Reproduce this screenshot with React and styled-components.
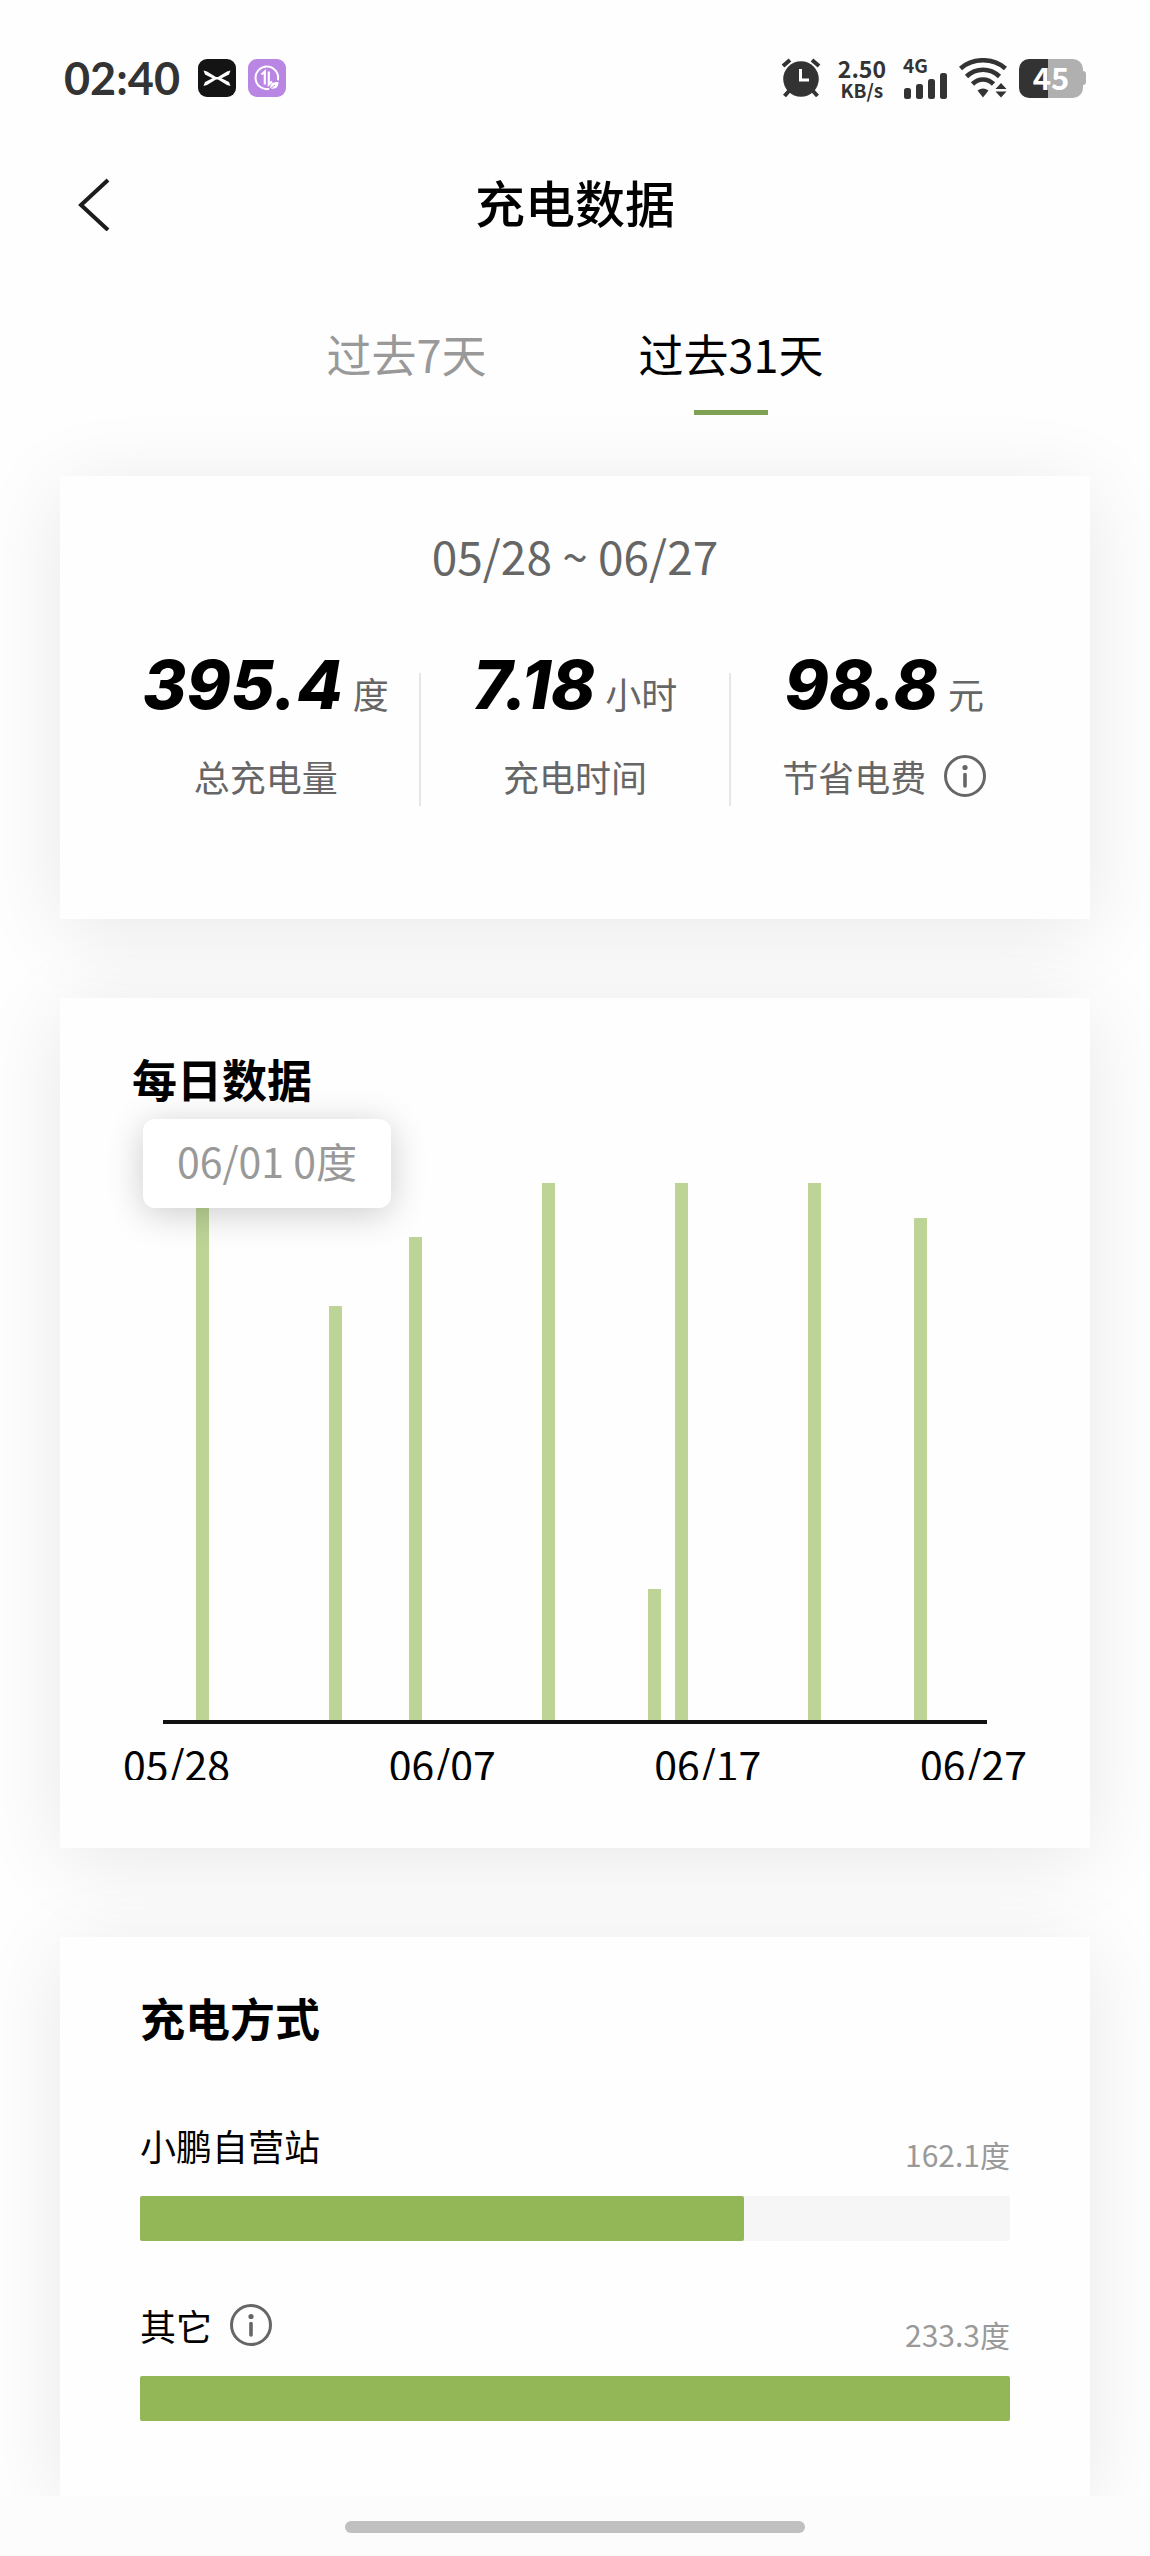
import React, { useState } from 'react'
import styled, { createGlobalStyle } from 'styled-components'

const GlobalStyle = createGlobalStyle`
* { box-sizing: border-box; }
body {
    margin: 0;
    background: #fefefe;
    color: #000;
    font-family: "Noto Sans CJK SC", "Noto Sans", sans-serif;
}
button {
    margin: 0;
    padding: 0;
    border: 0;
    background: none;
    color: inherit;
    font: inherit;
    cursor: pointer;
}
h1, h2, p { margin: 0; }
svg { display: block; }
`;

const Screen = styled.div`
display: flex;
flex-direction: column;
min-height: 100vh;
`;

const StatusBar = styled.div`
display: flex;
justify-content: space-between;
align-items: center;
height: 116px;
padding: 40px 64px 0;
color: #333;
font-family: Lato, sans-serif;
`;
const StatusGroup = styled.div`
display: flex;
align-items: center;
gap: ${props => props.$gap}px;
`;
const Clock = styled.span`
font-size: 45px;
line-height: 48px;
font-weight: 700;
margin-right: 6px;
`;
const Speed = styled.div`
display: flex;
flex-direction: column;
align-items: center;
font-family: "Noto Sans CJK SC", sans-serif;
font-weight: 700;
font-size: 23px;
line-height: 24px;
`;
const SpeedUnit = styled.span`
font-size: 19px;
line-height: 20px;
`;
const Cell = styled.div`
font-family: "Noto Sans CJK SC", sans-serif;
font-weight: 700;
font-size: 19px;
line-height: 16px;
`;
const Battery = styled.div`
display: flex;
align-items: center;
`;
const BatteryBody = styled.div`
width: 64px;
height: 39px;
border-radius: 10px;
background: linear-gradient(90deg, #333 45%, #b0b0b0 45%);
color: #fff;
font-family: "Noto Sans CJK SC", sans-serif;
font-weight: 700;
font-size: 31px;
line-height: 36px;
text-align: center;
`;
const BatteryTip = styled.div`
width: 3px;
height: 14px;
border-radius: 0 3px 3px 0;
background: #b0b0b0;
`;

const Header = styled.header`
display: grid;
grid-template-columns: 1fr auto 1fr;
align-items: center;
height: 170px;
padding: 0 78px;
`;
const BackButton = styled.button`
justify-self: start;
`;
const PageTitle = styled.h1`
font-size: 50px;
line-height: 60px;
font-weight: 500;
`;

const Tabs = styled.div`
display: flex;
justify-content: center;
gap: 152px;
padding: 38px 0 61px;
`;
const Tab = styled.button`
display: flex;
flex-direction: column;
align-items: center;
gap: 26px;
font-size: 45px;
line-height: 60px;
color: ${props => props.$active ? '#000' : '#999'};

&::after {
    content: "";
    width: 74px;
    height: 5px;
    background: ${props => props.$active ? '#7fa154' : 'transparent'};
}
`;

const Content = styled.main`
flex: 1;
display: flex;
flex-direction: column;
padding: 0 60px;
`;
const Card = styled.section`
position: relative;
background: #fefefe;
box-shadow: 0 12px 80px rgba(0, 0, 0, 0.09);
`;
const SummaryCard = styled(Card)`
padding: 49px 52px 113px;
margin-bottom: 79px;
`;
const DailyCard = styled(Card)`
padding: 51px 0 68px;
margin-bottom: 89px;
`;
const MethodCard = styled(Card)`
flex: 1;
padding: 51px 80px 75px;
`;
const CardTitle = styled.h2`
font-size: 45px;
line-height: 60px;
font-weight: 700;
`;
const DailyTitle = styled(CardTitle)`
padding: 0 72px;
`;

const DateRange = styled.p`
text-align: center;
font-size: 46px;
line-height: 60px;
color: #666;
`;
const Stats = styled.div`
display: grid;
grid-template-columns: 1fr 2px 1fr 2px 1fr;
align-items: end;
margin-top: 60px;
`;
const Divider = styled.div`
height: 133px;
background: #e6e6e6;
`;
const Stat = styled.div`
display: flex;
flex-direction: column;
align-items: center;
gap: 27px;
padding-bottom: 6px;
color: #666;
font-size: 36px;
line-height: 48px;
`;
const StatValue = styled.div`
display: flex;
align-items: baseline;
gap: 10px;
`;
const StatNumber = styled.span`
color: #000;
font-family: Inter, sans-serif;
font-size: 67px;
line-height: 80px;
font-weight: 800;
font-style: italic;
`;
const LabelWithInfo = styled.div`
display: flex;
align-items: center;
gap: 18px;
`;

const Plot = styled.div`
display: grid;
grid-template-columns: repeat(31, 1fr);
justify-items: center;
align-items: end;
height: 541px;
margin: 74px 103px 0;
border-bottom: 4px solid #111;
`;
const Bar = styled.div`
width: 13px;
background: #bed497;
`;
const AxisLabels = styled.div`
display: flex;
justify-content: space-between;
height: 42px;
margin-top: 14px;
padding: 0 63px;
overflow: hidden;
font-size: 41px;
line-height: 50px;
`;
const Tooltip = styled.div`
position: absolute;
top: 121px;
left: 83px;
padding: 0 34px 6px;
border-radius: 12px;
background: #fff;
box-shadow: 0 6px 36px rgba(0, 0, 0, 0.2);
color: #999;
font-size: 41px;
line-height: 83px;
`;

const MethodList = styled.div`
display: flex;
flex-direction: column;
gap: 60px;
margin-top: 73px;
`;
const MethodHead = styled.div`
display: flex;
justify-content: space-between;
height: 53px;
margin-bottom: 22px;
font-size: 36px;
line-height: 48px;
`;
const MethodName = styled(LabelWithInfo)`
align-self: flex-start;
`;
const MethodValue = styled.span`
align-self: flex-end;
color: #999;
font-size: 30px;
line-height: 40px;
`;
const Track = styled.div`
height: 45px;
border-radius: 2px;
background: #f6f6f6;
`;
const Fill = styled.div`
height: 100%;
border-radius: 2px;
background: #93b757;
`;

const HomeBar = styled.div`
position: relative;
display: flex;
justify-content: center;
height: 60px;
padding-top: 25px;
background: #fcfcfc;

&::after {
    content: "";
    width: 40%;
    height: 12px;
    border-radius: 6px;
    background: #c0c0c0;
}
`;

// 31 days from 05/28, share of the tallest bar
const days = Array(31).fill(0);
days[1] = 100;
days[6] = 77.1;
days[9] = 90;
days[14] = 100;
days[18] = 24.4;
days[19] = 100;
days[24] = 100;
days[28] = 93.4;

const axisLabels = ['05/28', '06/07', '06/17', '06/27'];

const stats = [
    { value: '395.4', unit: '度', label: '总充电量' },
    { value: '7.18', unit: '小时', label: '充电时间' },
    { value: '98.8', unit: '元', label: '节省电费', info: true },
];

const methods = [
    { name: '小鹏自营站', value: 162.1 },
    { name: '其它', value: 233.3, info: true },
];
const maxMethod = Math.max(...methods.map(m => m.value));

function InfoButton() {
    return (
        <button type="button" aria-label="说明">
            <svg width="42" height="42" viewBox="0 0 42 42">
                <circle cx="21" cy="21" r="19.5" fill="none" stroke="#666" strokeWidth="3" />
                <circle cx="21" cy="12.5" r="2.6" fill="#666" />
                <path d="M21 19.5v11.5" stroke="#666" strokeWidth="3.6" strokeLinecap="round" />
            </svg>
        </button>
    );
}

function XpengIcon() {
    return (
        <svg width="38" height="38" viewBox="0 0 38 38">
            <rect width="38" height="38" rx="9" fill="#141414" />
            <path d="M5.5 11.5 L9 12.5 L18 18 L20 18 L29 12.5 L32.5 11.5 L31 15.5 L23.5 19.2 L31 23 L32.5 27 L29 26 L20 20.6 L18 20.6 L9 26 L5.5 27 L7 23 L14.5 19.2 L7 15.5 Z" fill="#fff" />
        </svg>
    );
}

function SaverIcon() {
    return (
        <svg width="38" height="38" viewBox="0 0 38 38">
            <rect width="38" height="38" rx="9" fill="#ba86e4" />
            <path d="M20.5 30 A11.3 11.3 0 1 1 30 20.5" fill="none" stroke="#fff" strokeWidth="2" strokeLinecap="round" />
            <path d="M13.5 15.5 L16.8 12.5 V25.5 M20.8 12.5 V25.5 L24 22.5" fill="none" stroke="#fff" strokeWidth="2.2" />
            <path d="M30.5 23 C24.5 23 21.5 25 22.3 29.5 C28 30.5 30.5 28 30.5 23 Z" fill="#fff" />
            <path d="M21 31 L27 26" stroke="#ba86e4" strokeWidth="1" />
        </svg>
    );
}

function AlarmIcon() {
    return (
        <svg width="40" height="40" viewBox="0 0 40 40">
            <circle cx="20" cy="21" r="17.8" fill="#333" />
            <path d="M2 8 L9 2 M31 2 L38 8 M8 33 L3.5 38 M32 33 L36.5 38" stroke="#333" strokeWidth="4" />
            <path d="M19.5 11 V22 H28" fill="none" stroke="#fff" strokeWidth="3" />
        </svg>
    );
}

function SignalIcon() {
    return (
        <svg width="44" height="26" viewBox="0 0 44 26">
            <rect x="1" y="15" width="7" height="11" rx="2.5" fill="#333" />
            <rect x="13" y="11" width="7" height="15" rx="2.5" fill="#333" />
            <rect x="25" y="6" width="7" height="20" rx="2.5" fill="#333" />
            <rect x="37" y="0" width="7" height="26" rx="2.5" fill="#333" />
        </svg>
    );
}

function WifiIcon() {
    return (
        <svg width="48" height="40" viewBox="0 0 48 40">
            <g fill="none" stroke="#333" strokeWidth="4.6">
                <path d="M1.5 10.5 C14 -0.5 34 -0.5 46.5 10.5" />
                <path d="M7.5 18.5 C17 9.5 31 9.5 40.5 18.5" />
                <path d="M13.5 26 C19.5 20 28.5 20 34.5 26" />
            </g>
            <path d="M18.5 32.5 Q24 28.5 29.5 32.5 L24 39.5 Z" fill="#333" />
            <path d="M42 25 L47.5 31 H36.5 Z M36.5 33.5 H47.5 L42 39.5 Z" fill="#333" />
        </svg>
    );
}

function App() {

    const [range, setRange] = useState(31);

    return (
        <Screen>
            <GlobalStyle />

            <StatusBar>
                <StatusGroup $gap={12}>
                    <Clock>02:40</Clock>
                    <XpengIcon />
                    <SaverIcon />
                </StatusGroup>
                <StatusGroup $gap={17}>
                    <AlarmIcon />
                    <Speed>
                        2.50
                        <SpeedUnit>KB/s</SpeedUnit>
                    </Speed>
                    <StatusGroup $gap={12}>
                        <Cell>
                            4G
                            <SignalIcon />
                        </Cell>
                        <WifiIcon />
                        <Battery>
                            <BatteryBody>45</BatteryBody>
                            <BatteryTip />
                        </Battery>
                    </StatusGroup>
                </StatusGroup>
            </StatusBar>

            <Header>
                <BackButton type="button" aria-label="返回">
                    <svg width="32" height="60" viewBox="0 0 32 60">
                        <path d="M30 9 L3 34 L30 59" fill="none" stroke="#1c1c1c" strokeWidth="4" />
                    </svg>
                </BackButton>
                <PageTitle>充电数据</PageTitle>
            </Header>

            <Tabs>
                <Tab type="button" $active={range === 7} onClick={() => setRange(7)}>过去7天</Tab>
                <Tab type="button" $active={range === 31} onClick={() => setRange(31)}>过去31天</Tab>
            </Tabs>

            <Content>
                <SummaryCard>
                    <DateRange>05/28 ~ 06/27</DateRange>
                    <Stats>
                        {stats.map((s, i) => (
                            <React.Fragment key={s.label}>
                                {i > 0 && <Divider />}
                                <Stat>
                                    <StatValue>
                                        <StatNumber>{s.value}</StatNumber>
                                        <span>{s.unit}</span>
                                    </StatValue>
                                    <LabelWithInfo>
                                        {s.label}
                                        {s.info && <InfoButton />}
                                    </LabelWithInfo>
                                </Stat>
                            </React.Fragment>
                        ))}
                    </Stats>
                </SummaryCard>

                <DailyCard>
                    <DailyTitle>每日数据</DailyTitle>
                    <Plot>
                        {days.map((d, i) => <Bar key={i} style={{ height: `${d}%` }} />)}
                    </Plot>
                    <AxisLabels>
                        {axisLabels.map(l => <span key={l}>{l}</span>)}
                    </AxisLabels>
                    <Tooltip>06/01 0度</Tooltip>
                </DailyCard>

                <MethodCard>
                    <CardTitle>充电方式</CardTitle>
                    <MethodList>
                        {methods.map(m => (
                            <div key={m.name}>
                                <MethodHead>
                                    <MethodName>
                                        {m.name}
                                        {m.info && <InfoButton />}
                                    </MethodName>
                                    <MethodValue>{m.value}度</MethodValue>
                                </MethodHead>
                                <Track>
                                    <Fill style={{ width: `${m.value / maxMethod * 100}%` }} />
                                </Track>
                            </div>
                        ))}
                    </MethodList>
                </MethodCard>
            </Content>

            <HomeBar />
        </Screen>
    );

}
export default App;
